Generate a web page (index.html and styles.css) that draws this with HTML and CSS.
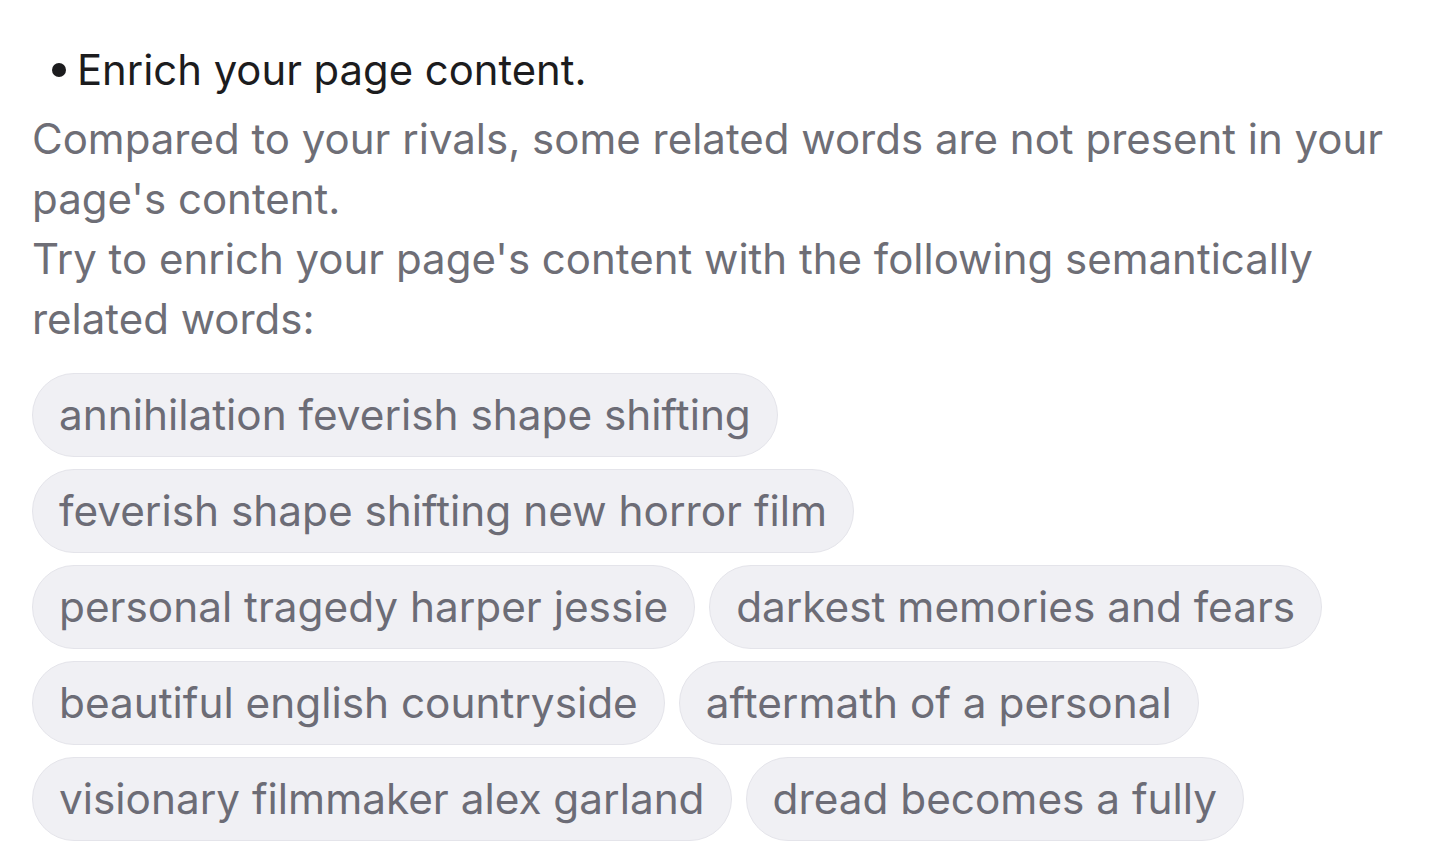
FILE: index.html
```html
<!DOCTYPE html>
<html lang="en">

<head>
    <meta charset="UTF-8" />
    <meta name="viewport" content="width=device-width, initial-scale=1.0" />
    <title>Enrich your page content</title>
    <link rel="stylesheet" href="styles.css">
</head>

<body>
    <div class="advice">
        <div class="advice-title">
            <span class="bullet"></span>
            <span>Enrich your page content.</span>
        </div>

        <p class="advice-text">
            Compared to your rivals, some related words are not present in your page's content.<br>
            Try to enrich your page's content with the following semantically related words:
        </p>

        <div class="chips">
            <span class="chip">annihilation feverish shape shifting</span>
            <span class="chip">feverish shape shifting new horror film</span>
            <span class="chip">personal tragedy harper jessie</span>
            <span class="chip">darkest memories and fears</span>
            <span class="chip">beautiful english countryside</span>
            <span class="chip">aftermath of a personal</span>
            <span class="chip">visionary filmmaker alex garland</span>
            <span class="chip">dread becomes a fully</span>
        </div>
    </div>
</body>

</html>
```

FILE: styles.css
```css
* {
    box-sizing: border-box;
    font-family: 'Inter', 'Noto Sans', sans-serif;
}

body {
    margin: 0;
    background-color: #ffffff;
}

.advice {
    padding: 40px 32px 0;
}

.advice-title {
    display: flex;
    align-items: center;
    gap: 11px;
    padding-left: 20px;
    font-size: 41.8px;
    line-height: 60px;
    color: #1c1c1e;
}

.bullet {
    width: 14px;
    height: 14px;
    border-radius: 50%;
    background-color: #1c1c1e;
}

.advice-text {
    margin: 9px 0 24px;
    font-size: 42px;
    line-height: 60px;
    color: #6e6e76;
}

.chips {
    display: flex;
    flex-wrap: wrap;
    gap: 12px 14px;
}

.chip {
    display: inline-block;
    height: 84px;
    line-height: 82px;
    padding: 0 26px;
    font-size: 42.3px;
    color: #6c6c76;
    background-color: #f0f0f4;
    border: 1px solid #e4e4ea;
    border-radius: 42px;
    white-space: nowrap;
}
```
